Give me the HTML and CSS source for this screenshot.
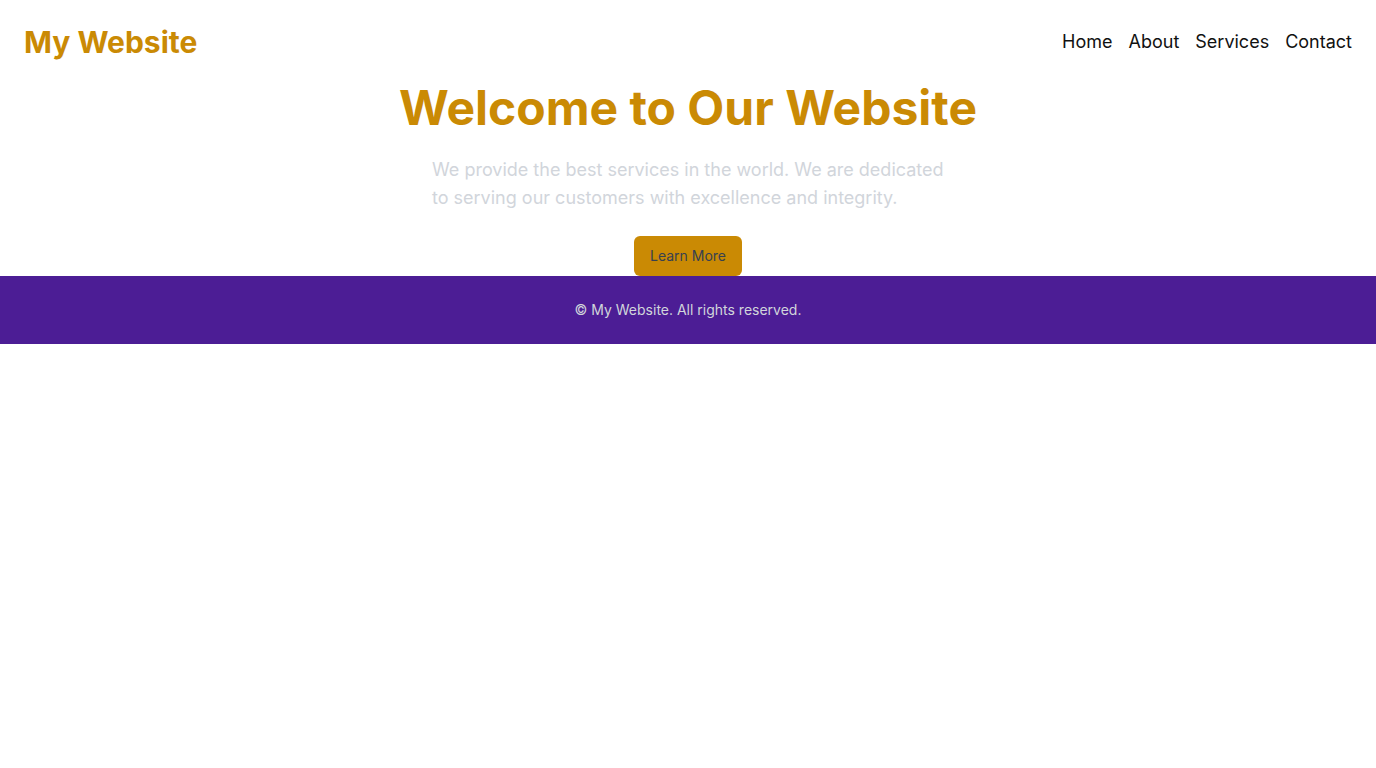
FILE: index.html
```html
<!DOCTYPE html>
<html lang="en">
<head>
<meta charset="utf-8">
<title>My Website</title>
<link rel="stylesheet" href="styles.css">
</head>
<body>
<header class="site-header">
  <div class="logo">My Website</div>
  <nav class="nav">
    <a href="#">Home</a>
    <a href="#">About</a>
    <a href="#">Services</a>
    <a href="#">Contact</a>
  </nav>
</header>
<main class="hero">
  <h1 class="hero-title">Welcome to Our Website</h1>
  <p class="hero-text">We provide the best services in the world. We are dedicated to serving our customers with excellence and integrity.</p>
  <a class="btn" href="#">Learn More</a>
</main>
<footer class="site-footer">
  <p>© My Website. All rights reserved.</p>
</footer>
</body>
</html>
```
FILE: styles.css
```css
* { box-sizing: border-box; }
html, body { margin: 0; padding: 0; }
body {
  font-family: Inter, "Noto Sans", sans-serif;
  background: #ffffff;
  color: #111827;
}
.site-header {
  display: flex;
  justify-content: space-between;
  align-items: center;
  padding: 24px;
}
.logo {
  font-size: 30px;
  line-height: 36px;
  font-weight: 700;
  color: #ca8a04;
}
.nav {
  display: flex;
  gap: 16px;
}
.nav a {
  font-size: 18px;
  line-height: 28px;
  color: #111111;
  text-decoration: none;
}
.hero {
  display: flex;
  flex-direction: column;
  align-items: center;
}
.hero-title {
  margin: 0;
  font-size: 48px;
  line-height: 48px;
  font-weight: 700;
  color: #ca8a04;
}
.hero-text {
  margin: 24px 0 0;
  max-width: 512px;
  font-size: 18px;
  line-height: 28px;
  color: #d1d5db;
}
.btn {
  margin-top: 24px;
  display: inline-block;
  padding: 10px 16px;
  font-size: 14px;
  line-height: 20px;
  background: #ca8a04;
  color: #374151;
  border-radius: 6px;
  text-decoration: none;
}
.site-footer {
  background: #4c1d95;
  padding: 24px;
  text-align: center;
}
.site-footer p {
  margin: 0;
  font-size: 14px;
  line-height: 20px;
  color: #d1d5db;
}
```
